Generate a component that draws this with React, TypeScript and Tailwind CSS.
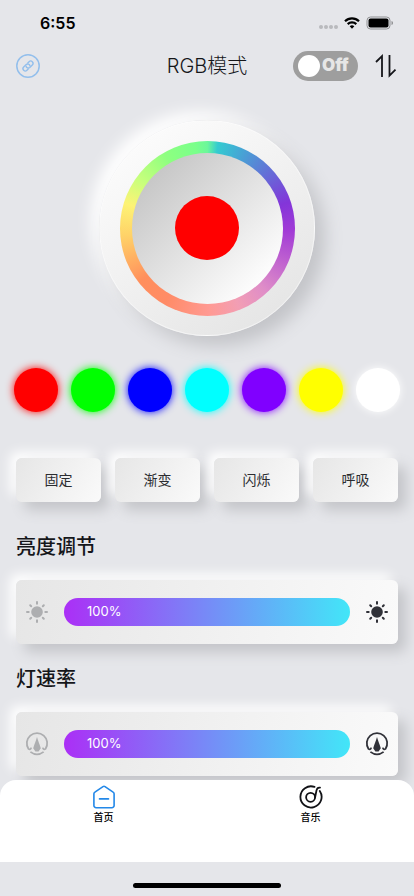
import { useState } from "react";
import type { ReactNode } from "react";

const FONT = "font-['Inter','Noto_Sans_CJK_SC',sans-serif]";

const RAISED =
  "shadow-[8px_8px_14px_#c3c4c8,-6px_-6px_12px_#ffffff]";

const SWATCHES = [
  { name: "红色", cls: "bg-[#ff0000] shadow-[0_0_8px_#ff0000]" },
  { name: "绿色", cls: "bg-[#00ff00] shadow-[0_0_8px_#00ff00]" },
  { name: "蓝色", cls: "bg-[#0000ff] shadow-[0_0_8px_#0000ff]" },
  { name: "青色", cls: "bg-[#00ffff] shadow-[0_0_8px_#00ffff]" },
  { name: "紫色", cls: "bg-[#8000ff] shadow-[0_0_8px_#8000ff]" },
  { name: "黄色", cls: "bg-[#ffff00] shadow-[0_0_8px_#ffff00]" },
  { name: "白色", cls: "bg-white shadow-[0_0_8px_#ffffff]" },
];

const MODES = ["固定", "渐变", "闪烁", "呼吸"];

function StatusBar() {
  return (
    <div className="flex h-11 items-center justify-between pt-0.5 pr-5 pl-10">
      <span className="text-base font-semibold text-black">6:55</span>
      <div className="flex items-center gap-1.5">
        <svg width="20" height="14" viewBox="0 0 20 14" fill="#b9babd">
          <circle cx="3" cy="11" r="2" />
          <circle cx="8" cy="11" r="2" />
          <circle cx="13" cy="11" r="2" />
          <circle cx="18" cy="11" r="2" />
        </svg>
        <svg width="16" height="12" viewBox="0 0 16 12" fill="none" stroke="#000" strokeWidth="2.2">
          <path d="M1 4.2a10 10 0 0 1 14 0" />
          <path d="M3.7 7.1a6.2 6.2 0 0 1 8.6 0" />
          <path d="M8 11.7 5.7 9.3a3.3 3.3 0 0 1 4.6 0Z" fill="#000" stroke="none" />
        </svg>
        <svg width="28" height="14" viewBox="0 0 28 14" fill="none">
          <rect x="1" y="1" width="23" height="12" rx="3.5" stroke="#8f9093" />
          <rect x="2.5" y="2.5" width="20" height="9" rx="2" fill="#000" />
          <path d="M25.5 5v4c1-.3 1.5-1 1.5-2s-.5-1.7-1.5-2Z" fill="#8f9093" />
        </svg>
      </div>
    </div>
  );
}

function LinkIcon() {
  return (
    <svg width="24" height="24" viewBox="0 0 24 24" fill="none" stroke="#93bfec" strokeWidth="1.5">
      <circle cx="12" cy="12" r="11.2" />
      <g transform="rotate(-45 12 12)" strokeWidth="1.4" strokeLinecap="round">
        <path d="M10 14.3H8.2a2.3 2.3 0 0 1 0-4.6h3.6a2.3 2.3 0 0 1 1.7 3.6" />
        <path d="M14 9.7h1.8a2.3 2.3 0 0 1 0 4.6h-3.6a2.3 2.3 0 0 1-1.700-3.6" />
      </g>
    </svg>
  );
}

function SortIcon() {
  return (
    <svg width="24" height="24" viewBox="0 0 24 24" fill="none" stroke="#15161a" strokeWidth="1.8">
      <path d="M2 8 8 2.2V23" />
      <path d="M15.5 1v20.6l6-6" />
    </svg>
  );
}

function SunIcon() {
  return (
    <svg width="24" height="24" viewBox="0 0 24 24" stroke="currentColor" strokeWidth="2" strokeLinecap="round">
      <circle cx="12" cy="12" r="5.8" fill="currentColor" stroke="none" />
      <path d="M12 2v1.7M12 20.3V22M2 12h1.7M20.3 12H22M5.2 5.2l1 1M17.8 17.8l1 1M5.2 18.8l1-1M17.8 6.2l1-1" />
    </svg>
  );
}

function SpeedIcon() {
  return (
    <svg width="24" height="24" viewBox="0 0 24 24" fill="none" stroke="currentColor" strokeWidth="1.8">
      <path d="M6.2 15.6c-.4 1.7-1.6 2.2-2.7 1.3a10.2 10.2 0 1 1 17 0c-1.100.9-2.3.4-2.700-1.3" />
      <path d="M5.4 19.9q6.6 5 13.2 0" />
      <path d="M12 5c1 3.7 2.6 7 3.8 11.200L13.6 19.6h-3.2L8.200 16.200C9.400 12 11 8.700 12 5Z" fill="currentColor" stroke="none" />
    </svg>
  );
}

function HomeIcon() {
  return (
    <svg width="24" height="24" viewBox="0 0 24 24" fill="none" stroke="#2388e8" strokeWidth="1.6" strokeLinecap="round" strokeLinejoin="round">
      <path d="M11 1.6a2 2 0 0 1 2 0l8.100 5.500a2 2 0 0 1 1 1.700V20.500a2.200 2.200 0 0 1-2.200 2.200H4.100a2.200 2.200 0 0 1-2.200-2.200V8.800a2 2 0 0 1 1-1.700Z" />
      <path d="M7.5 13.9h9" />
    </svg>
  );
}

function MusicIcon() {
  return (
    <svg width="24" height="24" viewBox="0 0 24 24" fill="none" stroke="#111216" strokeWidth="1.8" strokeLinecap="round">
      <path d="M15.500 1.900A10.600 10.600 0 1 0 20.800 6" />
      <circle cx="11.600" cy="12.300" r="4.500" />
      <path d="M16.100 12.300 17.500 5.400C18 3.300 19.200 2.400 21 2.700" />
    </svg>
  );
}

function Dial() {
  return (
    <div className="mx-auto mt-8 flex size-54 items-center justify-center rounded-full border border-white/50 bg-linear-[145deg,#ffffff,#e2e2e2] shadow-[10px_10px_18px_#c3c4c8,-8px_-8px_16px_#ffffff]">
      <div className="flex size-[175px] items-center justify-center rounded-full bg-[conic-gradient(#6cf79b_0deg,#34cbd0_7deg,#3fb3d4_18deg,#8335d9_72deg,#a23bd6_92deg,#df8dc8_137deg,#f29eb4_158deg,#ff9a94_178deg,#ff8b66_210deg,#ff8f5c_232deg,#ffd268_265deg,#fdf375_287deg,#c9ff7c_305deg,#8eff80_330deg,#79ff8b_352deg,#6cf79b_360deg)]">
        <div className="flex size-[151px] items-center justify-center rounded-full bg-linear-[135deg,#c4c4c4_10%,#ffffff_88%]">
          <div className="size-16 rounded-full bg-[#ff0000]" />
        </div>
      </div>
    </div>
  );
}

type LevelProps = {
  id: string;
  title: string;
  icon: ReactNode;
};

function Level({ id, title, icon }: LevelProps) {
  const [value, setValue] = useState(100);

  return (
    <section>
      <label htmlFor={id} className="block text-xl leading-7 font-medium text-[#15161a]">
        {title}
      </label>
      <div className={`mt-[19px] flex h-16 items-center gap-[15px] rounded-md bg-linear-[100deg,#e6e6e6,#fafafa] px-[9px] ${RAISED}`}>
        <span className="text-[#adaeb0]">{icon}</span>
        <div className="relative flex h-7 flex-1 items-center rounded-full">
          <input
            id={id}
            type="range"
            min={0}
            max={100}
            value={value}
            onChange={(e) => setValue(Number(e.target.value))}
            className="h-7 w-full appearance-none rounded-full bg-linear-[90deg,#ab2ff6,#42e6f8] [&::-webkit-slider-thumb]:size-7 [&::-webkit-slider-thumb]:appearance-none"
          />
          <span className="pointer-events-none absolute left-[23px] text-[13px] text-white">
            {value}%
          </span>
        </div>
        <span className="text-[#303138]">{icon}</span>
      </div>
    </section>
  );
}

export default function App() {
  const [on, setOn] = useState(false);

  return (
    <div className={`flex min-h-screen flex-col bg-[#e5e6ea] ${FONT}`}>
      <StatusBar />

      <header className="grid h-11 grid-cols-[1fr_auto_1fr] items-center px-4">
        <a href="#link" aria-label="连接" className="justify-self-start">
          <LinkIcon />
        </a>
        <h1 className="text-xl font-light text-[#15161a]">RGB模式</h1>
        <div className="flex items-center gap-4 justify-self-end">
          <button
            type="button"
            role="switch"
            aria-checked={on}
            aria-label="开关"
            onClick={() => setOn(!on)}
            className="flex h-[30px] w-[65px] items-center gap-0.5 rounded-full bg-[#9e9e9e] px-[5px] text-[17px] font-black text-[#e6e6e6]"
          >
            <span className="size-[22px] shrink-0 rounded-full bg-white" />
            {on ? "On" : "Off"}
          </button>
          <button type="button" aria-label="切换">
            <SortIcon />
          </button>
        </div>
      </header>

      <main>
        <Dial />

        <div className="mt-8 flex justify-between px-3.5">
          {SWATCHES.map((s) => (
            <button
              key={s.name}
              type="button"
              aria-label={s.name}
              className={`size-11 rounded-full ${s.cls}`}
            />
          ))}
        </div>

        <div className="mt-[46px] grid grid-cols-4 gap-3.5 px-4">
          {MODES.map((m) => (
            <button
              key={m}
              type="button"
              className={`h-11 rounded-md bg-linear-[120deg,#e6e6e6,#fafafa] text-sm text-[#2b2c30] ${RAISED}`}
            >
              {m}
            </button>
          ))}
        </div>

        <div className="mt-[31px] flex flex-col gap-[21px] px-4">
          <Level id="brightness" title="亮度调节" icon={<SunIcon />} />
          <Level id="speed" title="灯速率" icon={<SpeedIcon />} />
        </div>
      </main>

      <footer className="relative mt-auto">
        <nav className="grid h-[82px] grid-cols-2 items-start rounded-t-2xl bg-white pt-[5px] text-[10px] leading-4 font-medium text-black">
          <a href="#home" className="flex flex-col items-center">
            <HomeIcon />
            首页
          </a>
          <a href="#music" className="flex flex-col items-center">
            <MusicIcon />
            音乐
          </a>
        </nav>
        <div className="flex h-[34px] items-end justify-center bg-[#e5e6ea] pb-2">
          <div className="h-[5px] w-37 rounded-full bg-black" />
        </div>
      </footer>
    </div>
  );
}
